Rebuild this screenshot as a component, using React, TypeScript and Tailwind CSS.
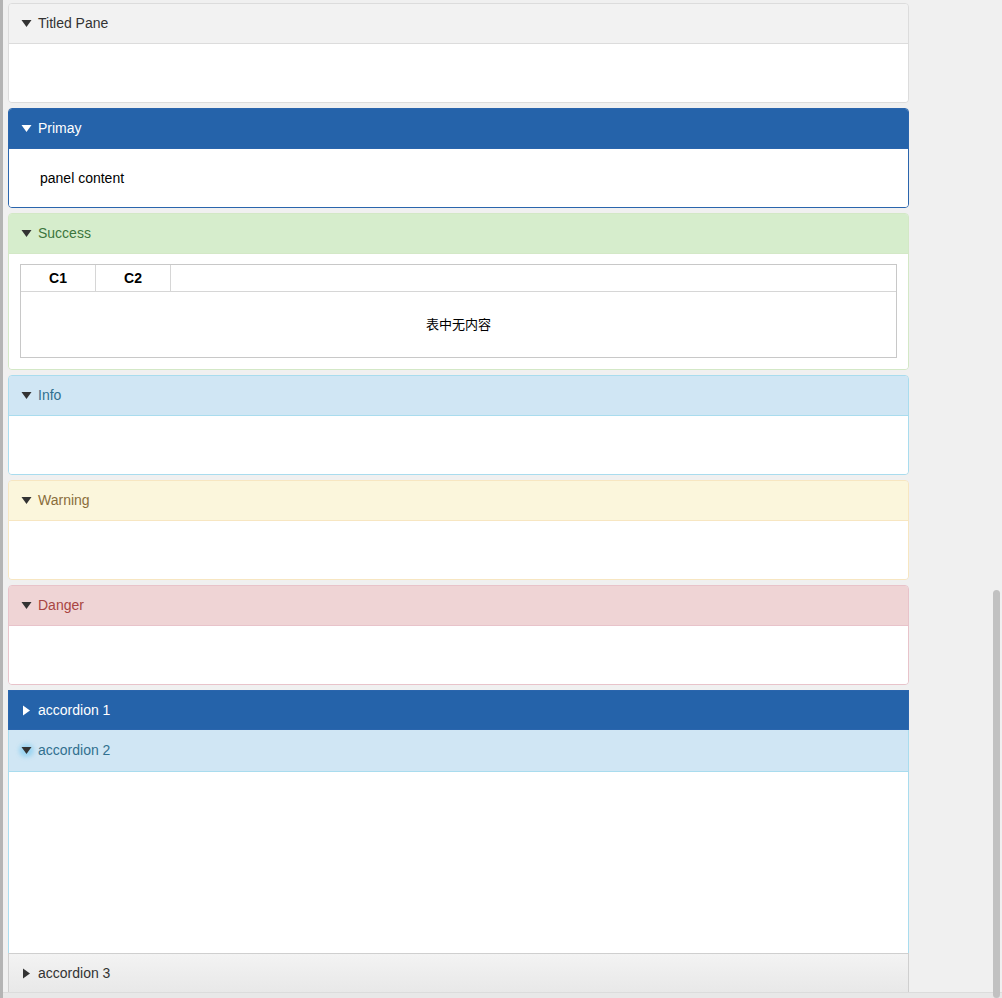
import React from "react";

const Down = ({ color = "#333" }: { color?: string }) => (
  <svg width="11" height="9" viewBox="0 0 11 9" className="shrink-0">
    <polygon points="0.5,1 10.5,1 5.5,8" fill={color} />
  </svg>
);
const Right = ({ color = "#333" }: { color?: string }) => (
  <svg width="11" height="11" viewBox="0 0 11 11" className="shrink-0">
    <polygon points="2,0.5 9,5.5 2,10.5" fill={color} />
  </svg>
);

type PaneProps = {
  title: string;
  headerCls: string;
  borderCls: string;
  textCls: string;
  tri: string;
  children?: React.ReactNode;
  bodyCls?: string;
};

function Pane({ title, headerCls, borderCls, textCls, tri, children, bodyCls }: PaneProps) {
  return (
    <div className={`w-[901px] rounded-[4px] border overflow-hidden ${borderCls}`}>
      <div className={`h-[40px] flex items-center pl-[12px] gap-[6px] border-b ${headerCls} ${borderCls}`}>
        <Down color={tri} />
        <span className={`text-[14px] ${textCls}`}>{title}</span>
      </div>
      <div className={`bg-white ${bodyCls ?? "h-[58px]"}`}>{children}</div>
    </div>
  );
}

export default function App() {
  return (
    <div
      className="relative w-[1002px] h-[998px] bg-[#f0f0f0] border-l-[3px] border-[#b4b4b4] overflow-hidden"
      style={{ fontFamily: '"Liberation Sans", Arial, "Noto Sans CJK SC", sans-serif' }}
    >
      <div className="flex flex-col gap-[5px] pt-[3px] pl-[5px]">
        <Pane
          title="Titled Pane"
          headerCls="bg-[#f2f2f2]"
          borderCls="border-[#dcdcdc]"
          textCls="text-[#333333]"
          tri="#333"
        />
        <Pane
          title="Primay"
          headerCls="bg-[#2563aa]"
          borderCls="border-[#2a65ad]"
          textCls="text-white"
          tri="#ffffff"
          bodyCls="h-[58px] flex items-center pl-[31px]"
        >
          <span className="text-[14px] text-black">panel content</span>
        </Pane>
        <Pane
          title="Success"
          headerCls="bg-[#d6edcc]"
          borderCls="border-[#d3e8c6]"
          textCls="text-[#3c763d]"
          tri="#333"
          bodyCls="px-[11px] pt-[10px] pb-[11px]"
        >
          <div className="border border-[#c8c8c8] h-[94px] flex flex-col">
            <div className="flex h-[27px] border-b border-[#d6d6d6] bg-white">
              <div className="w-[75px] border-r border-[#d6d6d6] flex items-center justify-center text-[14px] font-bold text-black">
                C1
              </div>
              <div className="w-[75px] border-r border-[#d6d6d6] flex items-center justify-center text-[14px] font-bold text-black">
                C2
              </div>
            </div>
            <div className="flex-1 flex items-center justify-center text-[13px] text-black">表中无内容</div>
          </div>
        </Pane>
        <Pane
          title="Info"
          headerCls="bg-[#d0e6f4]"
          borderCls="border-[#a9dcee]"
          textCls="text-[#31708f]"
          tri="#333"
        />
        <Pane
          title="Warning"
          headerCls="bg-[#fbf6dc]"
          borderCls="border-[#f7e6c1]"
          textCls="text-[#8a6d3b]"
          tri="#333"
        />
        <Pane
          title="Danger"
          headerCls="bg-[#efd4d5]"
          borderCls="border-[#e8c3ca]"
          textCls="text-[#a94442]"
          tri="#333"
        />
        <div className="w-[901px] flex flex-col">
          <div className="h-[40px] bg-[#2563aa] border border-[#2a65ad] flex items-center pl-[12px] gap-[6px]">
            <Right color="#ffffff" />
            <span className="text-[14px] text-white">accordion 1</span>
          </div>
          <div className="h-[42px] bg-[#d0e6f4] border border-t-0 border-[#a9dcee] flex items-center pl-[12px] gap-[6px]">
            <span className="relative flex items-center justify-center w-[11px] h-[11px]">
              <span className="absolute w-[15px] h-[13px] rounded-full bg-[#8fd0f0] blur-[2px] opacity-80"></span>
              <span className="relative"><Down color="#333" /></span>
            </span>
            <span className="text-[14px] text-[#31708f]">accordion 2</span>
          </div>
          <div className="h-[181px] bg-white border-x border-[#a9dcee]"></div>
          <div className="h-[41px] bg-gradient-to-b from-[#f3f3f3] to-[#e8e8e8] border border-[#cfcfcf] flex items-center pl-[12px] gap-[6px]">
            <Right color="#333" />
            <span className="text-[14px] text-[#333333]">accordion 3</span>
          </div>
        </div>
      </div>
      <div className="absolute left-0 right-0 bottom-0 h-[6px] bg-[#e8e8e8] border-t border-[#dcdcdc]"></div>
      <div className="absolute right-[2px] top-[590px] bottom-0 w-[7px] rounded-full bg-[#c1c1c1]"></div>
    </div>
  );
}
